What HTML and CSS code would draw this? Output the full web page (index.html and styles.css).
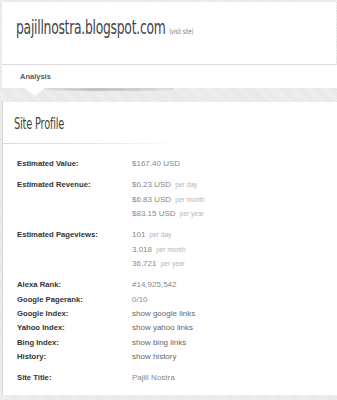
FILE: index.html
```html
<!DOCTYPE html>
<html lang="en">
<head>
    <meta charset="UTF-8">
    <meta name="viewport" content="width=device-width, initial-scale=1.0">
    <title>pajillnostra.blogspot.com - Analysis</title>
    <link rel="stylesheet" href="styles.css">
</head>
<body>
    <div class="header">
        <h1><span class="narrow">pajillnostra.blogspot.com <a class="visit" href="#">(visit site)</a></span></h1>
    </div>
    <div class="tabs">
        <span class="tab">Analysis</span>
    </div>
    <div class="band">
        <span class="pointer"></span>
        <span class="shadow"></span>
    </div>
    <div class="card">
        <h2><span class="narrow">Site Profile</span></h2>
        <div class="rule"></div>
        <div class="rows">
            <div class="row group">
                <div class="label">Estimated Value:</div>
                <div class="values"><div>$167.40 USD</div></div>
            </div>
            <div class="row group">
                <div class="label">Estimated Revenue:</div>
                <div class="values">
                    <div>$0.23 USD <span class="unit">per day</span></div>
                    <div>$6.83 USD <span class="unit">per month</span></div>
                    <div>$83.15 USD <span class="unit">per year</span></div>
                </div>
            </div>
            <div class="row group">
                <div class="label">Estimated Pageviews:</div>
                <div class="values">
                    <div>101 <span class="unit">per day</span></div>
                    <div>3,018 <span class="unit">per month</span></div>
                    <div>36,721 <span class="unit">per year</span></div>
                </div>
            </div>
            <div class="row group">
                <div class="label">Alexa Rank:</div>
                <div class="values"><div>#14,925,542</div></div>
            </div>
            <div class="row">
                <div class="label">Google Pagerank:</div>
                <div class="values"><div>0/10</div></div>
            </div>
            <div class="row">
                <div class="label">Google Index:</div>
                <div class="values"><div class="link">show google links</div></div>
            </div>
            <div class="row">
                <div class="label">Yahoo Index:</div>
                <div class="values"><div class="link">show yahoo links</div></div>
            </div>
            <div class="row">
                <div class="label">Bing Index:</div>
                <div class="values"><div class="link">show bing links</div></div>
            </div>
            <div class="row">
                <div class="label">History:</div>
                <div class="values"><div class="link">show history</div></div>
            </div>
            <div class="row group">
                <div class="label">Site Title:</div>
                <div class="values"><div>Pajill Nostra</div></div>
            </div>
        </div>
    </div>
    <div class="footer"></div>
</body>
</html>
```

FILE: styles.css
```css
body {
    margin: 0;
    padding: 0;
    font-family: "Liberation Sans", Arial, sans-serif;
    background-color: #e6e6e6;
    background-image: repeating-linear-gradient(45deg, rgba(255,255,255,0.35) 0 1px, transparent 1px 2px);
    overflow: hidden;
}
.header {
    margin: 2px 1px 0 2px;
    height: 62px;
    background: #fff;
    border-bottom: 1px solid #dcdcdc;
}
/* no condensed face installed, so squeeze the heading font */
.narrow {
    display: inline-block;
    white-space: nowrap;
    transform-origin: 0 50%;
}
h1 {
    margin: 0;
    padding: 14px 0 0 14px;
    font-family: "DejaVu Sans", sans-serif;
    font-weight: normal;
    font-size: 19px;
    letter-spacing: -0.4px;
    color: #444;
}
h1 .narrow {
    transform: scaleX(0.65);
}
.visit {
    font-size: 7.5px;
    letter-spacing: 0;
    color: #777;
    text-decoration: none;
}
.tabs {
    background: #fff;
    height: 23px;
    margin-left: 2px;
}
.tab {
    display: inline-block;
    padding: 7px 0 0 18px;
    font-size: 7.5px;
    font-weight: bold;
    color: #555a66;
}
.band {
    position: relative;
    height: 14px;
}
.pointer {
    position: absolute;
    left: 25px;
    top: 0;
    width: 0;
    height: 0;
    border-left: 10px solid transparent;
    border-right: 10px solid transparent;
    border-top: 8px solid #fff;
}
.shadow {
    position: absolute;
    left: 44px;
    top: 0;
    width: 130px;
    height: 3px;
    border-radius: 0 0 50% 50%;
    background: linear-gradient(90deg, rgba(0,0,0,0.05), rgba(0,0,0,0.18) 40%, rgba(0,0,0,0.05));
}
.card {
    margin-left: 2px;
    background: #fff;
    height: 293px;
    border-left: 1px solid #d8d8d8;
}
h2 {
    margin: 0;
    padding: 13px 0 0 11px;
    height: 28px;
    font-family: "DejaVu Sans", sans-serif;
    font-weight: normal;
    font-size: 15px;
    letter-spacing: -0.3px;
    color: #444;
}
h2 .narrow {
    transform: scaleX(0.655);
}
.rule {
    height: 1px;
    width: 175px;
    background: linear-gradient(90deg, #d4dcdc, #e4eaea 60%, rgba(228,234,234,0));
}
.rows {
    padding: 13px 0 0 14px;
}
.row {
    display: flex;
    line-height: 14.4px;
}
.row.group {
    margin-top: 6.8px;
}
.row:first-child {
    margin-top: 0;
}
.label {
    width: 115px;
    font-size: 7.7px;
    font-weight: bold;
    color: #333;
}
.values {
    font-size: 8px;
    color: #888;
}
.values .link {
    color: #666;
}
.unit {
    margin-left: 2px;
    font-size: 6.5px;
    color: #b4b4b4;
}
```
